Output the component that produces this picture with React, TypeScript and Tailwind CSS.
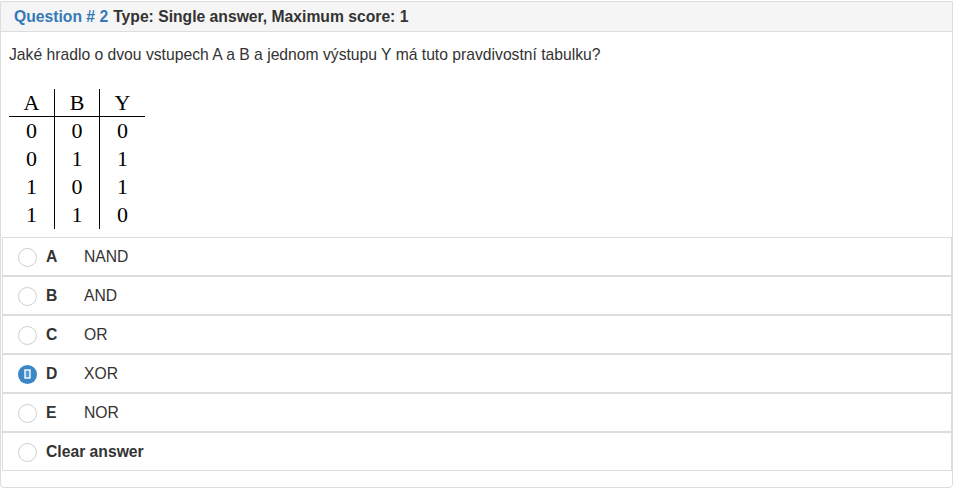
const rows = [
  ['0', '0', '0'],
  ['0', '1', '1'],
  ['1', '0', '1'],
  ['1', '1', '0'],
]

const options = [
  { key: 'A', label: 'NAND' },
  { key: 'B', label: 'AND' },
  { key: 'C', label: 'OR' },
  { key: 'D', label: 'XOR', checked: true },
  { key: 'E', label: 'NOR' },
]

function Radio({ checked }: { checked?: boolean }) {
  if (checked) {
    return (
      <span className="flex h-[19px] w-[19px] items-center justify-center rounded-full bg-[#3b86c8]">
        <svg width="7" height="10" viewBox="0 0 7 10">
          <rect x="1" y="1" width="5" height="8" fill="#5b9ad6" stroke="#fff" strokeWidth="1.4" />
        </svg>
      </span>
    )
  }
  return <span className="h-[19px] w-[19px] rounded-full border border-[#cfcfcf] bg-white" />
}

export default function App() {
  return (
    <div className="bg-white pt-px font-['Liberation_Sans',Arial,sans-serif] text-[15.7px] text-[#333]">
      <div className="h-[487px] rounded-b-[4px] border border-[#ddd]">
        <div className="flex h-[30px] items-center border-b border-[#ddd] bg-[#f5f5f5] px-[13px] font-bold">
          <span className="text-[#337ab7]">Question # 2</span>
          <span className="ml-[5px]">Type: Single answer, Maximum score: 1</span>
        </div>

        <div className="pt-[12px]">
          <p className="px-[8px] leading-[21px]">
            Jaké hradlo o dvou vstupech A a B a jednom výstupu Y má tuto pravdivostní tabulku?
          </p>

          <div className="ml-[8px] mt-[24px] grid w-[136px] grid-cols-[45px_45px_46px] font-['Liberation_Serif','Times_New_Roman',serif] text-[22px] leading-none text-black">
            <div className="flex h-[28px] items-center justify-center border-b border-black pt-[1px]">A</div>
            <div className="flex h-[28px] items-center justify-center border-b border-l border-black pt-[1px]">B</div>
            <div className="flex h-[28px] items-center justify-center border-b border-l border-black pt-[1px]">Y</div>
            {rows.map((r, i) =>
              r.map((v, j) => (
                <div
                  key={i + '-' + j}
                  className={
                    j === 0
                      ? 'flex h-[28px] items-center justify-center'
                      : 'flex h-[28px] items-center justify-center border-l border-black'
                  }
                >
                  {v}
                </div>
              ))
            )}
          </div>

          <div className="ml-px mt-[8px]">
            {options.map((o) => (
              <div key={o.key} className="flex h-[39px] items-center border border-[#ddd] pl-[15px] pt-px">
                <Radio checked={o.checked} />
                <span className="ml-[9px] w-[38px] font-bold">{o.key}</span>
                <span>{o.label}</span>
              </div>
            ))}
            <div className="flex h-[39px] items-center border border-[#ddd] pl-[15px] pt-px">
              <Radio />
              <span className="ml-[9px] font-bold">Clear answer</span>
            </div>
          </div>
        </div>
      </div>
    </div>
  )
}
